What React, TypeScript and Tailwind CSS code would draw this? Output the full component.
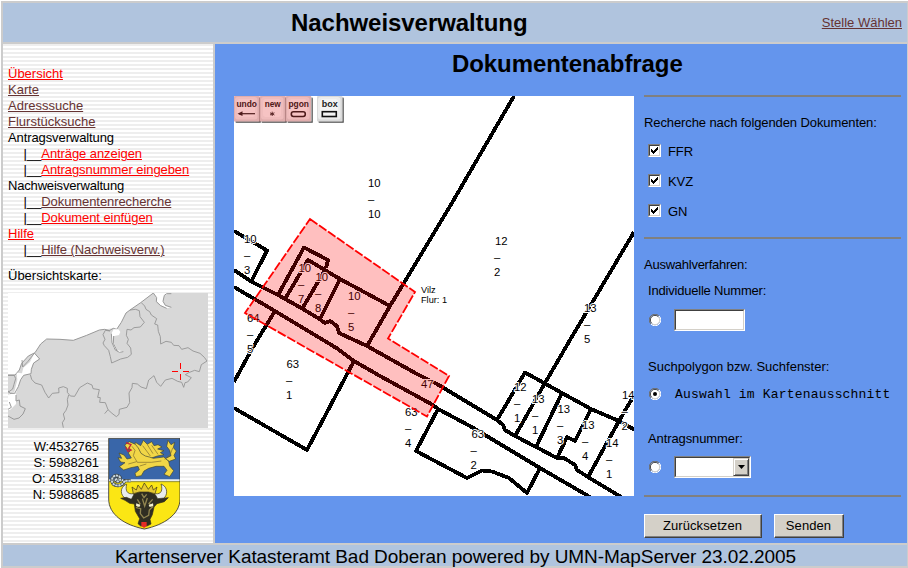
import React from "react";

type Label = { x: number; y: number; top: string; bottom?: string; bx?: number };

const labels: Label[] = [
  { x: 368, y: 187, top: "10", bottom: "10" },
  { x: 495, y: 245, top: "12", bottom: "2", bx: 494 },
  { x: 584, y: 312, top: "13", bottom: "5" },
  { x: 244, y: 243, top: "10", bottom: "3" },
  { x: 298.5, y: 272, top: "10", bottom: "7", bx: 298 },
  { x: 315.5, y: 281, top: "10", bottom: "8", bx: 315 },
  { x: 348, y: 300, top: "10", bottom: "5" },
  { x: 247, y: 322, top: "64", bottom: "5" },
  { x: 286.5, y: 368, top: "63", bottom: "1", bx: 286 },
  { x: 421, y: 388, top: "47" },
  { x: 405, y: 416, top: "63", bottom: "4" },
  { x: 471.5, y: 438, top: "63", bottom: "2", bx: 470.5 },
  { x: 514, y: 391, top: "12", bottom: "1" },
  { x: 532, y: 403, top: "13", bottom: "1" },
  { x: 557.5, y: 413, top: "13", bottom: "3", bx: 557 },
  { x: 582, y: 429, top: "13", bottom: "4" },
  { x: 606, y: 447, top: "14", bottom: "1" },
  { x: 622, y: 399, top: "14", bottom: "2", bx: 621.5 },
];

const boundaries = [
  "234,231 267,250.5 251.5,281",
  "234,270 252,282 278,295 303,309 321,320 325,323 330,321 337,326 339,333 367,346 417,374 437,384 497,420 503,425 505,430 515,436 536,447 557,458 564,458 575,465 577,470 588,477 621,497",
  "234,287 275,311 338,349 354,361 380,376 433,405 438,409 470,426 540,468 590,497",
  "275,311 253,347 234,382",
  "354,361 307,450 234,408",
  "438,409 416,451 467,478 482,470.5 492,471.5 509,478 527,493 540,468",
  "514,96 449,208 390,306 367,346",
  "634,232 570,340 545,383 515,436",
  "278,295 304,247.5 328,260 326,268",
  "285,299 308,260 340,279 390,306",
  "302,309 325,270",
  "320,319 340,279",
  "497,420 525,372.5 562,393 591,409 619,421 635,430",
  "562,393 536,447",
  "591,409 575,441 567,437 557,458",
  "633,397 619,421 588,477",
];

function ToolButton({ x, label, children }: { x: number; label: string; children: React.ReactNode }) {
  return (
    <g>
      <rect x={x + 1.5} y={97.5} width={25.5} height={25.5} rx={1} fill="#777" />
      <rect x={x} y={96} width={25.5} height={25.5} rx={1} fill="#d9d9d9" />
      <rect x={x + 1} y={97} width={22.5} height={22.5} rx={3} fill="#ececec" />
      <rect x={x + 3} y={99} width={18} height={18} rx={3} fill="#f4f4f4" />
      <text x={x + 12.7} y={107} fontSize={9.5} fontWeight="bold" textAnchor="middle" textLength={label.length === 3 ? 16 : 20.5} lengthAdjust="spacingAndGlyphs" fill="#222">{label}</text>
      {children}
    </g>
  );
}

function ParcelMap() {
  return (
    <svg className="block h-[400px] w-[400px] bg-white font-['Liberation_Sans',Arial,sans-serif]" viewBox="234 96 400 400">
      <g fill="none" stroke="#000" strokeWidth={3.8} strokeLinejoin="round" shapeRendering="crispEdges">
        {boundaries.map((points) => <polyline key={points} points={points} />)}
      </g>
      <g fontSize={11.3} fill="#000" stroke="#fff" strokeWidth={2} paintOrder="stroke">
        {labels.map((l) => (
          <g key={`${l.x}-${l.y}`}>
            <text x={l.x} y={l.y}>{l.top}</text>
            {l.bottom && <text x={l.bx ?? l.x} y={l.y + 16}>–</text>}
            {l.bottom && <text x={l.bx ?? l.x} y={l.y + 31}>{l.bottom}</text>}
          </g>
        ))}
      </g>
      <g fontSize={9.2}>
        <text x={421} y={293}>Vilz</text>
        <text x={421} y={303}>Flur: 1</text>
      </g>
      <ToolButton x={234} label="undo">
        <path d="M239 113.7H255" stroke="#222" strokeWidth={1.2} />
        <path d="M237.5 113.7L242.5 111.3V116.1Z" fill="#222" />
      </ToolButton>
      <ToolButton x={260} label="new">
        <path d="M272.2 111.7V116M270 112.8L274.4 115M274.4 112.8L270 115" stroke="#222" strokeWidth={0.9} />
      </ToolButton>
      <ToolButton x={286} label="pgon">
        <rect x={291.3} y={111.7} width={14} height={4.8} rx={2.2} fill="none" stroke="#222" strokeWidth={1.6} />
      </ToolButton>
      <ToolButton x={317} label="box">
        <rect x={322.3} y={111.7} width={14} height={4.8} fill="none" stroke="#111" strokeWidth={1.6} />
      </ToolButton>
      <rect x={234} y={96} width={77} height={25.5} fill="#f00" fillOpacity={0.2} />
      <polygon points="310,219 415,292 388,338.5 449,376 427,416.5 245,313" fill="#f00" fillOpacity={0.25} stroke="#f00" strokeWidth={1.8} strokeDasharray="9 2" />
    </svg>
  );
}

function OverviewMap() {
  return (
    <svg className="block h-[135px] w-[200px] bg-[#d8d8d8]" viewBox="24 39 600 405">
      <g fill="#fff" stroke="#999" strokeWidth={3} strokeLinejoin="round">
        <path stroke="none" d="M24 39H460L422 68L390 90L378 99L364 127L350 148L340 145L298 150L260 166L220 181L180 178L140 177L122 192L105 218L85 228L65 250L58 270L45 285H24Z" />
        <path fill="none" d="M460 39L422 68L390 90L378 99L364 127L350 148L340 145L328 152L314 148L298 150L260 166L220 181L180 178L140 177L122 192L105 218L85 228L65 250L58 270L45 285H24" />
        <path stroke="none" d="M103 219L118 236L100 249L93 268L93 281L70 286L62 299L48 340L24 330L48 342V372L30 390H24V344L42 340L52 300L50 278L66 280L70 263L90 246Z" />
        <path fill="none" d="M103 219L119 237L101 249L94 268L93 281L71 286L62 299L55 320L44 340L30 340L24 332M48 345V363L58 360L60 378L76 386L69 402L57 414L42 418L24 408M24 388L34 382L28 366" />
        <path stroke="none" d="M341 148H355L361 156L357 165L340 169L342 190L352 211L370 214L358 218L340 203L335 180L334 161Z" />
        <path fill="none" d="M334 161L336 188L345 209L358 217L370 215M352 214L340 190L341 168" />
        <path stroke="none" d="M460 39H510L493 46L489 64L496 77L514 82L500 85L482 76L470 64L469 52Z" />
        <path fill="none" d="M460 39L470 53L469 65L482 77L500 85M514 41H500L493 46L489 64L496 76L514 82" />
      </g>
      <g fill="none" stroke="#929292" strokeWidth={2.6} strokeLinejoin="miter">
        <path d="M424 68L434 78L438 88L449 95L454 105L470 116L464 132L473 135L475 154L481 170L482 192L498 184L514 187L521 196L537 197L545 208L564 203L579 213L600 220L613 232L621 243L604 254L598 275L584 271L566 278L556 284L574 293L563 306L555 308L551 322L545 307L533 304L516 295L496 300L482 319L470 307L462 287L446 300L439 326L423 321L412 312L397 310L396 323L387 339L389 368L381 382L358 388L357 403L349 410L336 400L324 389L314 401M324 389L316 368L299 367L301 353L293 352L298 329L279 326L276 315L262 309L239 323L224 349L211 348L202 337L202 325L190 320L176 324L177 338L157 340L146 354L135 337L125 315L105 309L95 298L91 284" />
        <path d="M206 345L202 359L204 375L198 391L190 402L194 417L187 428L190 443" />
        <path d="M390 90L407 88L418 92L420 110L433 127L421 141L402 143L393 150L381 148L379 166L385 178L381 190L392 204L394 223L383 232L362 237L335 249L331 230L326 211L313 197L309 189L315 178L309 164L316 151L330 153" />
        <path d="M24 286H43L47 296L42 313L38 327L24 337M103 220L84 244L68 261L66 240" />
      </g>
      <path d="M541 249V267M541 282V300M516 274H533M549 274H567" stroke="#f00" strokeWidth={3} shapeRendering="crispEdges" />
    </svg>
  );
}

function CoatOfArms() {
  return (
    <svg className="block h-[92px] w-[72px]" viewBox="22 23 216 276">
      <defs>
        <clipPath id="shield"><path d="M24 24H238V206C238 252 190 284 131 296C70 284 24 252 24 206Z" /></clipPath>
      </defs>
      <g clipPath="url(#shield)">
        <path d="M24 24H240V152H24Z" fill="#3966a9" />
        <path d="M24 152H240V300H24Z" fill="#fbe614" />
        <path d="M24 150H240" stroke="#e7edf1" strokeWidth={6} />
        <path d="M24 154H240" stroke="#27343b" strokeWidth={1.5} />
      </g>
      <g fill="#f1d647" stroke="#3f4630" strokeWidth={2} strokeLinejoin="round">
        <path d="M119 77L100 62L104 36L120 46L128 30L140 42L153 34L160 46L172 43L184 50L171 56L190 61L179 67L190 73L170 77L150 84L132 82Z" />
        <path d="M72 44L86 34L104 42L113 53L121 69L134 77L146 80L158 84L189 80L204 92L207 107L219 121L207 139L190 132L199 120L190 108L166 108L144 114L130 122L122 136L106 139L103 129L116 118L112 108L91 112L69 119L56 109L73 97L60 95L52 82L63 84L55 68L70 74L79 86L92 83L83 68L91 58L80 57Z" />
        <path d="M194 85L211 76L207 60L198 48L202 30L211 43L222 36L218 52L227 62L220 75L225 86L206 93Z" />
        <path fill="none" stroke="#7b692c" d="M126 46L149 77M140 43L157 70M153 45L172 72M94 48L103 60L98 76L110 96L152 96L182 92M83 101L108 94M117 107L137 101M192 87L209 72L216 53" />
      </g>
      <path d="M76 37L91 43L84 54L91 59L82 63L75 51" fill="none" stroke="#c22638" strokeWidth={4} />
      <path d="M90 151H72C66 170 37 170 34 153C32 139 45 132 55 138C64 144 57 157 47 152C42 148 49 144 53 148" fill="none" stroke="#3b4548" strokeWidth={10} />
      <path d="M90 151H72C66 170 37 170 34 153C32 139 45 132 55 138C64 144 57 157 47 152C42 148 49 144 53 148" fill="none" stroke="#c9d7df" strokeWidth={6} strokeDasharray="7 2" />
      <g stroke="#342d18" strokeWidth={2} strokeLinejoin="round">
        <path fill="#e8ecec" d="M76 162C57 172 58 194 75 205C85 211 101 208 107 201L98 190C80 193 73 181 78 162ZM183 162C202 170 202 195 188 205C176 212 160 206 156 200L164 190C182 193 187 179 181 161Z" />
        <path fill="#302e22" d="M101 190L119 185H146L164 193L171 205L203 202L191 214L169 220L160 230L155 253L148 267L151 281L139 287H120L112 280L117 265L104 243L101 221L87 219L73 210L60 204L77 201L92 207Z" />
        <path fill="#e5c833" d="M98 190L94 170L107 179L112 164L122 177L131 158L143 177L153 164L158 179L169 170L163 190L143 185H116Z" />
      </g>
      <path d="M123 190L130 202L138 192M110 207L118 220L108 232L120 235L119 250L129 263L144 255L146 239L156 229L145 219L156 207M125 205L132 227L140 203" stroke="#918550" strokeWidth={4} fill="none" />
      <path d="M107 219L119 224L116 230L106 226ZM157 219L144 224L147 230L158 226Z" fill="#f4f0d0" />
      <path d="M122 275H138V288L130 293L122 287Z" fill="#e62c26" />
      <path d="M24 24H238V206C238 252 190 284 131 296C70 284 24 252 24 206Z" fill="none" stroke="#343327" strokeWidth={2.5} />
    </svg>
  );
}

function NavLink({ children, visited, sub }: { children: string; visited?: boolean; sub?: boolean }) {
  return (
    <div className="whitespace-pre">
      {sub && <span className="pl-px">{"    |__"}</span>}
      <a className={`underline decoration-1 underline-offset-[1px] ${sub ? "tracking-[-0.08px]" : "tracking-normal"} ${visited ? "text-[#663333]" : "text-[#ff0000]"}`}>{children}</a>
    </div>
  );
}

function Checkbox({ label }: { label: string }) {
  return (
    <label className="flex h-4 gap-[7px]">
      <span className="mt-px flex h-[13px] w-[13px] items-center justify-center border border-t-[#808080] border-l-[#808080] border-r-white border-b-white bg-white">
        <span className="flex h-[11px] w-[11px] items-center justify-center border border-t-[#404040] border-l-[#404040] border-r-[#d4d0c8] border-b-[#d4d0c8]">
          <svg className="h-[7px] w-[7px]" viewBox="0 0 7 7" shapeRendering="crispEdges">
            <path d="M0 2h1v1h1v1h1v-1h1v-1h1v-1h1v-1h1v3h-1v1h-1v1h-1v1h-1v1h-1v-1h-1v-1h-1z" />
          </svg>
        </span>
      </span>
      <span className="pt-px tracking-[-0.1px]">{label}</span>
    </label>
  );
}

function Radio({ checked }: { checked?: boolean }) {
  return (
    <svg className="block h-3 w-3" viewBox="0 0 12 12">
      <circle cx={6} cy={6} r={5} fill="#fff" />
      <path d="M1.9 10.1A5.5 5.5 0 0 1 10.1 1.9" fill="none" stroke="#707070" />
      <path d="M2.7 9.3A4.6 4.6 0 0 1 9.3 2.7" fill="none" stroke="#404040" />
      <path d="M10.1 1.9A5.5 5.5 0 0 1 1.9 10.1" fill="none" stroke="#fff" />
      <path d="M9.3 2.7A4.6 4.6 0 0 1 2.7 9.3" fill="none" stroke="#d4d0c8" />
      {checked && <circle cx={6} cy={6} r={2} fill="#000" />}
    </svg>
  );
}

function Field({ children, wide }: { children?: React.ReactNode; wide?: boolean }) {
  return (
    <div className={`h-[22px] border border-t-[#808080] border-l-[#808080] border-r-white border-b-white ${wide ? "w-[77px]" : "w-[71px]"}`}>
      <div className="flex h-full justify-end border border-t-[#404040] border-l-[#404040] border-r-[#d4d0c8] border-b-[#d4d0c8] bg-white">{children}</div>
    </div>
  );
}

function FormButton({ children, wide }: { children: string; wide?: boolean }) {
  return (
    <button className={`h-6 border border-t-white border-l-white border-r-[#404040] border-b-[#404040] bg-[#d4d0c8] ${wide ? "w-[118px]" : "w-[70px]"}`}>
      <span className="flex h-full items-center justify-center border-r border-b border-[#808080] tracking-[0.1px]">{children}</span>
    </button>
  );
}

const Rule = () => <div className="h-[2px] w-[257px] bg-[#808080]" />;

export default function App() {
  return (
    <div className="h-[568px] w-[908px] bg-white pt-px pl-px font-['Liberation_Sans',Arial,sans-serif] text-[13px] leading-4 text-black">
      <div className="flex h-[567px] w-[907px] flex-col gap-[2px] border-2 border-r border-[#cccccc] bg-[#cccccc]">
        <header className="flex h-[39px] shrink-0 items-center bg-[#b0c4de]">
          <div className="w-[250px]" />
          <h1 className="flex-1 pl-[38px] text-[24px] leading-[38px] font-bold tracking-[-0.05px]">Nachweisverwaltung</h1>
          <a className="pr-[5px] text-[#663333] underline decoration-1 underline-offset-[1px]">Stelle Wählen</a>
        </header>
        <div className="flex h-[499px] shrink-0 gap-[2px]">
          <aside className="w-[210px] bg-[repeating-linear-gradient(to_bottom,#eeeeee_0px,#eeeeee_2px,#ffffff_2px,#ffffff_4px)] pt-[22px] pl-[5px]">
            <nav>
              <NavLink>Übersicht</NavLink>
              <NavLink visited>Karte</NavLink>
              <NavLink visited>Adresssuche</NavLink>
              <NavLink visited>Flurstücksuche</NavLink>
              <div className="tracking-[-0.1px]">Antragsverwaltung</div>
              <NavLink sub>Anträge anzeigen</NavLink>
              <NavLink sub>Antragsnummer eingeben</NavLink>
              <div className="tracking-[-0.18px]">Nachweisverwaltung</div>
              <NavLink sub visited>Dokumentenrecherche</NavLink>
              <NavLink sub>Dokument einfügen</NavLink>
              <NavLink>Hilfe</NavLink>
              <NavLink sub visited>Hilfe (Nachweisverw.)</NavLink>
            </nav>
            <p className="mt-[10px] mb-[9px]">Übersichtskarte:</p>
            <OverviewMap />
            <div className="mt-[10px] flex gap-[9px]">
              <div className="mt-px w-[91px] text-right tracking-[-0.1px]">
                <div>W:4532765</div>
                <div>S: 5988261</div>
                <div>O: 4533188</div>
                <div>N: 5988685</div>
              </div>
              <CoatOfArms />
            </div>
          </aside>
          <main className="w-[692px] bg-[#6495ed]">
            <h2 className="h-[51px] pl-[237px] text-[24px] leading-[40px] font-bold tracking-[-0.08px]">Dokumentenabfrage</h2>
            <div className="flex pl-[19px]">
              <div className="mt-px mr-[10px] h-[400px] w-[400px]"><ParcelMap /></div>
              <form>
                <Rule />
                <p className="mt-[18px] whitespace-nowrap tracking-[-0.1px]">Recherche nach folgenden Dokumenten:</p>
                <div className="mt-3 flex flex-col gap-[14px] pl-1">
                  <Checkbox label="FFR" />
                  <Checkbox label="KVZ" />
                  <Checkbox label="GN" />
                </div>
                <div className="mt-[18px]"><Rule /></div>
                <p className="mt-[18px] tracking-[-0.25px]">Auswahlverfahren:</p>
                <div className="pl-1">
                  <p className="mt-[10px] tracking-[-0.2px]">Individuelle Nummer:</p>
                  <div className="mt-[10px] flex h-[22px] items-center gap-[13px] pl-px">
                    <Radio />
                    <Field />
                  </div>
                  <p className="mt-7">Suchpolygon bzw. Suchfenster:</p>
                  <div className="mt-[11px] flex h-4 items-center gap-[13px] pl-px">
                    <Radio checked />
                    <span className="pt-px pl-px font-['Liberation_Mono','Courier_New',monospace] tracking-[0.18px] whitespace-nowrap">Auswahl im Kartenausschnitt</span>
                  </div>
                  <p className="mt-[29px] tracking-[-0.1px]">Antragsnummer:</p>
                  <div className="mt-[9px] flex h-[22px] items-center gap-[13px] pl-px">
                    <Radio />
                    <Field wide>
                      <span className="flex h-[18px] w-4 items-center justify-center border border-t-[#d4d0c8] border-l-[#d4d0c8] border-r-[#404040] border-b-[#404040] bg-[#d4d0c8] shadow-[inset_1px_1px_0_#fff,inset_-1px_-1px_0_#808080]">
                        <svg className="h-1 w-[7px]" viewBox="0 0 7 4"><path d="M0 0H7L3.5 4Z" /></svg>
                      </span>
                    </Field>
                  </div>
                </div>
                <div className="mt-[17px]"><Rule /></div>
                <div className="mt-[17px] flex gap-3">
                  <FormButton wide>Zurücksetzen</FormButton>
                  <FormButton>Senden</FormButton>
                </div>
              </form>
            </div>
          </main>
        </div>
        <footer className="h-[21px] shrink-0 bg-[#b0c4de] pl-[112px] text-[19px] leading-[23px] tracking-[-0.06px] whitespace-nowrap">
          Kartenserver Katasteramt Bad Doberan powered by UMN-MapServer 23.02.2005
        </footer>
      </div>
    </div>
  );
}
